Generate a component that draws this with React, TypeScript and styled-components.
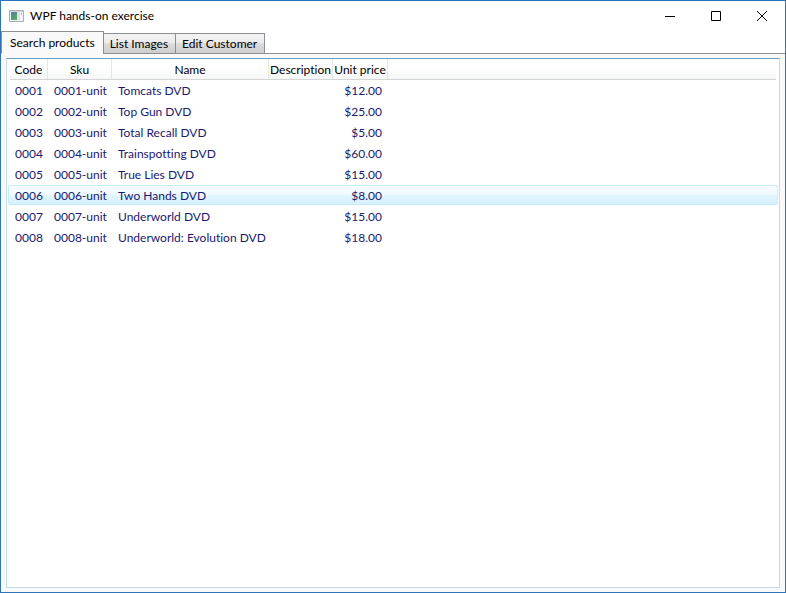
import React, { useState } from "react";
import styled, { createGlobalStyle } from "styled-components";

const GlobalStyle = createGlobalStyle`
  * { box-sizing: border-box; }
  body {
    margin: 0;
    background: #fff;
    font-family: Lato, "Open Sans", sans-serif;
    font-size: 12px;
    font-variant-ligatures: none;
    line-height: 16px;
    color: #000;
  }
  button { font: inherit; font-variant-ligatures: none; color: inherit; }
`;

const Window = styled.div`
  display: flex;
  flex-direction: column;
  min-height: 100vh;
  border: 1px solid #2d74ba;
`;

const TitleBar = styled.header`
  display: flex;
  align-items: center;
  height: 30px;
  padding-left: 8px;
`;

const Title = styled.h1`
  flex: 1;
  margin: 0 0 0 6px;
  font-size: 12px;
  font-weight: 400;
`;

const CaptionButton = styled.button`
  display: flex;
  align-items: center;
  justify-content: center;
  width: 46px;
  height: 30px;
  padding: 0;
  border: 0;
  background: transparent;
  &:hover { background: #e5e5e5; }
`;

const TabStrip = styled.div`
  display: flex;
  align-items: flex-end;
  height: 23px;
  box-shadow: inset 0 -1px #8c8e94;
`;

const Tab = styled.button<{ $active: boolean }>`
  height: ${(p) => (p.$active ? 23 : 21)}px;
  padding: ${(p) => (p.$active ? "0 8px" : "0 7px 0 6px")};
  border: 1px solid #8c8e94;
  border-bottom-color: ${(p) => (p.$active ? "#f9f9f9" : "#8c8e94")};
  background: ${(p) =>
    p.$active ? "#f9f9f9" : "linear-gradient(#f3f3f3, #ebebeb 50%, #dddddd 50%, #cdcdcd)"};
  white-space: nowrap;
  & + & { margin-left: -1px; }
`;

const TabPanel = styled.main`
  display: flex;
  flex: 1;
  padding: 4px 5px;
  background: #f9f9f9;
`;

const ListView = styled.div`
  flex: 1;
  padding: 0 1px;
  border: 1px solid #c5dbe9;
  border-top-color: #6e9ebf;
  background: #fff;
`;

const Table = styled.table`
  display: block;
  width: 100%;
  thead, tbody { display: block; }
`;

const columns = "64px 157px 64px 55px 1fr";

const HeaderRow = styled.tr`
  display: grid;
  grid-template-columns: 38px ${columns};
  height: 21px;
  margin: 0 2px;
  border-bottom: 1px solid #d5d5d5;
  background: linear-gradient(#fff 40%, #f6f7f8);
`;

const HeaderCell = styled.th`
  display: flex;
  align-items: center;
  justify-content: center;
  padding: 2px 0 0;
  border-right: 1px solid #e4e5e7;
  font-weight: 400;
  white-space: nowrap;
`;

const Row = styled.tr<{ $highlighted: boolean }>`
  display: grid;
  grid-template-columns: 39px ${columns};
  height: 20px;
  margin-bottom: 1px;
  border: 1px solid ${(p) => (p.$highlighted ? "#c5edfb" : "transparent")};
  border-radius: 2px;
  background: ${(p) =>
    p.$highlighted ? "linear-gradient(#f8fdff, #edf9ff 50%, #e2f6fe 50%, #d5f1fd)" : "transparent"};
  background-clip: padding-box;
  color: #191970;
`;

const Cell = styled.td<{ $numeric?: boolean }>`
  padding: 2px 6px 0;
  text-align: ${(p) => (p.$numeric ? "right" : "left")};
  white-space: nowrap;
`;

const AppIcon = () => (
  <svg width="15" height="12" viewBox="0 0 15 12" aria-hidden="true">
    <defs>
      <linearGradient id="screen" x2="0.6" y2="1">
        <stop stopColor="#527fa0" />
        <stop offset="1" stopColor="#58a96c" />
      </linearGradient>
    </defs>
    <path d="M0.5 0.5h14v11H0.5z" fill="#f3f5f6" stroke="#a8adb1" />
    <path d="M1 1h13v1H1z" fill="#d5d9dc" />
    <path d="M2 2h6v8H2z" fill="url(#screen)" />
    <path d="M8 2h3v8H8z" fill="#dce0e9" />
    <path d="M12 2h1v3h-1z" fill="#c0c8d0" />
  </svg>
);

const captions = [
  { label: "Minimize", path: "M0 5.5h10" },
  { label: "Maximize", path: "M0.5 0.5h9v9h-9z" },
  { label: "Close", path: "M0 0L10 10M10 0L0 10" },
];

const tabs = ["Search products", "List Images", "Edit Customer"];
const headers = ["Code", "Sku", "Name", "Description", "Unit price"];

const products = [
  { code: "0001", name: "Tomcats DVD", price: "$12.00" },
  { code: "0002", name: "Top Gun DVD", price: "$25.00" },
  { code: "0003", name: "Total Recall DVD", price: "$5.00" },
  { code: "0004", name: "Trainspotting DVD", price: "$60.00" },
  { code: "0005", name: "True Lies DVD", price: "$15.00" },
  { code: "0006", name: "Two Hands DVD", price: "$8.00" },
  { code: "0007", name: "Underworld DVD", price: "$15.00" },
  { code: "0008", name: "Underworld: Evolution DVD", price: "$18.00" },
];

export default function App() {
  const [tab, setTab] = useState(0);
  const [highlighted, setHighlighted] = useState("0006");

  return (
    <>
      <GlobalStyle />
      <Window>
        <TitleBar>
          <AppIcon />
          <Title>WPF hands-on exercise</Title>
          {captions.map((c) => (
            <CaptionButton key={c.label} type="button" aria-label={c.label}>
              <svg width="10" height="10" viewBox="0 0 10 10" fill="none" stroke="#000">
                <path d={c.path} />
              </svg>
            </CaptionButton>
          ))}
        </TitleBar>
        <TabStrip role="tablist">
          {tabs.map((label, i) => (
            <Tab
              key={label}
              type="button"
              role="tab"
              aria-selected={i === tab}
              $active={i === tab}
              onClick={() => setTab(i)}
            >
              {label}
            </Tab>
          ))}
        </TabStrip>
        <TabPanel role="tabpanel">
          <ListView>
            <Table>
              <thead>
                <HeaderRow>
                  {headers.map((h) => (
                    <HeaderCell key={h} scope="col">{h}</HeaderCell>
                  ))}
                </HeaderRow>
              </thead>
              <tbody>
                {products.map((p) => (
                  <Row
                    key={p.code}
                    $highlighted={p.code === highlighted}
                    onMouseEnter={() => setHighlighted(p.code)}
                  >
                    <Cell>{p.code}</Cell>
                    <Cell>{p.code}-unit</Cell>
                    <Cell>{p.name}</Cell>
                    <Cell />
                    <Cell $numeric>{p.price}</Cell>
                  </Row>
                ))}
              </tbody>
            </Table>
          </ListView>
        </TabPanel>
      </Window>
    </>
  );
}
